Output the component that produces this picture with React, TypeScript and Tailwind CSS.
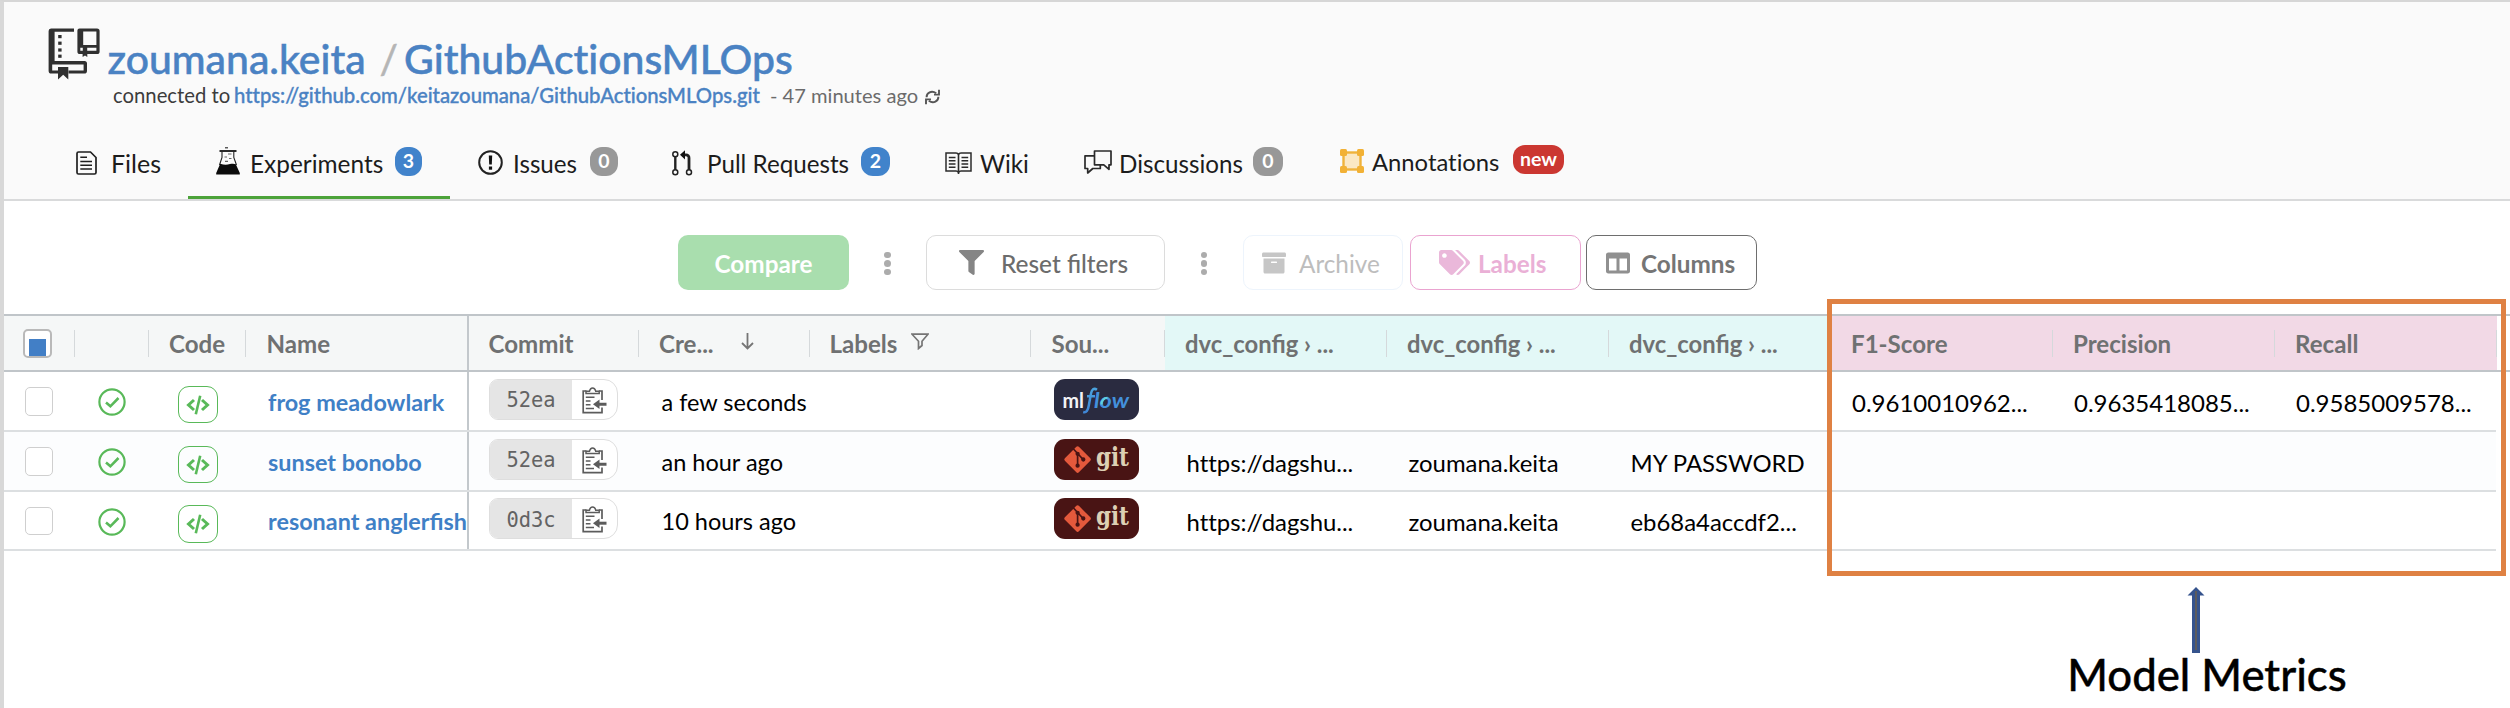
import type { ReactNode } from "react";
import { FaArchive, FaColumns, FaFilter, FaTags } from "react-icons/fa";

const NO_LIGA = "[font-variant-ligatures:none]";

function RepoIcon() {
  return (
    <svg width="52" height="52" viewBox="48 28 52 52" className="shrink-0">
      <g fill="#303030">
        <path d="M51 28.5H74V31.8H54.6V61H84.5A2.5 2.5 0 0 1 87 63.5V71A2.8 2.8 0 0 1 84.2 73.6H68.5V70.4H83.6V64.4H52.2V70.4H58V73.6H51.6A2.9 2.9 0 0 1 48.6 70.7V31A2.5 2.5 0 0 1 51 28.5Z" />
        <path d="M58 67H68.3V79.5L63.2 74.8L58 79.5Z" />
        <rect x="58.2" y="35" width="3.4" height="3.2" />
        <rect x="58.2" y="41.6" width="3.4" height="3.2" />
        <rect x="58.2" y="48.4" width="3.4" height="3.2" />
        <rect x="58.2" y="54.6" width="3.4" height="3.2" />
        <path
          fillRule="evenodd"
          d="M79.5 28.5H97A2.6 2.6 0 0 1 99.6 31.1V51.4A2.6 2.6 0 0 1 97 54H87.3V57L85 55.4L82.6 57V54H80A2.6 2.6 0 0 1 77.4 51.4V30.6A2.1 2.1 0 0 1 79.5 28.5ZM83.2 31.6V45H96.4V31.6ZM80.3 47.8V50.8H82.8V47.8ZM87.2 47.8V50.8H96.4V47.8Z"
        />
      </g>
    </svg>
  );
}

function SyncIcon() {
  return (
    <svg width="15" height="16" viewBox="0 0 15 16" fill="none" stroke="#555" strokeWidth="1.9">
      <path d="M1.6 8.2C1.500 4 6.500 .8 11.200 4.300" />
      <path d="M14 .8V5.600H9" />
      <path d="M13.400 7.800C13.500 12 8.500 15.200 3.800 11.700" />
      <path d="M1 15.200V10.400H6" />
    </svg>
  );
}

function FileIcon() {
  return (
    <svg width="21" height="24" viewBox="0 0 21 24" fill="none" stroke="#1f1f1f" strokeWidth="1.7">
      <path d="M2.500 1H14.500L20 6.500V21.500A1.500 1.500 0 0 1 18.500 23H2.500A1.500 1.500 0 0 1 1 21.500V2.500A1.500 1.500 0 0 1 2.500 1Z" />
      <path d="M4.300 6.300H11M4.300 10.500H16M4.300 14.200H16M4.300 18H16" strokeWidth="1.6" />
    </svg>
  );
}

function FlaskIcon() {
  return (
    <svg width="24" height="28" viewBox="0 0 24 28" className="-mt-[3px]">
      <path d="M9 .8H12" stroke="#333" strokeWidth="1.200" />
      <path d="M3.500 4H20.500" stroke="#111" strokeWidth="1.800" />
      <path d="M6 4.500V10.500L3.500 18M17.800 4.500V10.500L20.500 18" stroke="#222" strokeWidth="1.100" fill="none" />
      <path d="M12 7H15.500M8.500 10H11M13 11.500H15.500M9 14.300H12" stroke="#666" strokeWidth="1.200" />
      <path d="M4.200 16.800C8 18 11 18 14 17C16.500 16.400 18.500 16.600 19.800 17.200L23.800 26V27.600H.2V26Z" fill="#0b0b0b" />
    </svg>
  );
}

function IssueIcon() {
  return (
    <svg width="25" height="25" viewBox="0 0 25 25">
      <circle cx="12.500" cy="12.500" r="11.300" fill="none" stroke="#222" strokeWidth="2" />
      <path d="M10.800 5.500H14.200L13.800 14.500H11.200Z" fill="#111" />
      <rect x="10.900" y="16.500" width="3.200" height="3.200" fill="#111" />
    </svg>
  );
}

function PullIcon() {
  return (
    <svg width="22" height="26" viewBox="0 0 22 26" fill="none" stroke="#222">
      <circle cx="4.300" cy="4.300" r="2.500" strokeWidth="1.500" />
      <circle cx="4.300" cy="22.300" r="2.500" strokeWidth="1.500" />
      <circle cx="18" cy="22.300" r="2.500" strokeWidth="1.500" />
      <path d="M4.300 7V19.800" strokeWidth="2.400" />
      <path d="M12.500 4.800H15A3 3 0 0 1 18 8V19.800" strokeWidth="2.800" />
      <path d="M9 4.800L14 .2V9.400Z" fill="#111" stroke="none" />
    </svg>
  );
}

function WikiIcon() {
  return (
    <svg width="27" height="22" viewBox="0 0 27 22" fill="none" stroke="#2b2b2b">
      <path d="M13.500 2.500C13 1.400 12.500 1 11 1H1V19H11C12.500 19 13 19.400 13.500 20.500C14 19.400 14.500 19 16 19H26V1H16C14.500 1 14 1.400 13.500 2.500Z" strokeWidth="1.500" />
      <path d="M13.500 2V22" strokeWidth="1.600" />
      <path d="M3.800 5.500H10.500M3.800 8.800H10.500M3.800 12H10.500M3.800 15.200H10.500M16.500 5.500H23.200M16.500 8.800H23.200M16.500 12H23.200M16.500 15.200H23.200" strokeWidth="1.600" />
    </svg>
  );
}

function DiscussionIcon() {
  return (
    <svg width="28" height="24" viewBox="0 0 28 24" fill="none" stroke="#2b2b2b" strokeWidth="1.700" strokeLinejoin="round" className="-mt-px">
      <path d="M10.500 1H27V14.800H25V19.300L19.800 14.800H10.500Z" />
      <path d="M10.300 5.800H1V18.500H3.700V23L8.800 18.500H16.300V15" />
    </svg>
  );
}

function AnnotationIcon() {
  return (
    <svg width="24" height="24" viewBox="0 0 24 24">
      <rect x="3.500" y="3.500" width="17" height="17" fill="#fbe8c4" stroke="#efb33c" strokeWidth="2.400" />
      <g fill="#f2b135">
        <rect x="0" y="0" width="7" height="7" rx="1.500" />
        <rect x="17" y="0" width="7" height="7" rx="1.500" />
        <rect x="0" y="17" width="7" height="7" rx="1.500" />
        <rect x="17" y="17" width="7" height="7" rx="1.500" />
      </g>
    </svg>
  );
}

function Badge({ tone, children }: { tone: string; children: ReactNode }) {
  return (
    <span className={`-mt-[3px] flex h-[29px] items-center justify-center rounded-[12px] text-[19.5px] leading-none font-bold text-white ${tone}`}>
      <span className="-mt-px">{children}</span>
    </span>
  );
}

function Tab({ className, icon, label, labelClass, badge }: { className: string; icon: ReactNode; label: string; labelClass: string; badge?: ReactNode }) {
  return (
    <div className={`flex h-[70px] shrink-0 items-center border-b-[3px] pl-7 ${className}`}>
      {icon}
      <span className={`shrink-0 pt-[3px] whitespace-nowrap text-[#1c1c1c] ${NO_LIGA} ${labelClass}`}>{label}</span>
      {badge}
    </div>
  );
}

function Dots({ className }: { className: string }) {
  return (
    <div className={`flex flex-col items-center gap-[2px] ${className}`}>
      <i className="size-[6.5px] rounded-full bg-[#acacac]" />
      <i className="size-[6.5px] rounded-full bg-[#acacac]" />
      <i className="size-[6.5px] rounded-full bg-[#acacac]" />
    </div>
  );
}

function HeadCell({ className, children, last }: { className: string; children?: ReactNode; last?: boolean }) {
  return (
    <div className={`flex h-full shrink-0 items-center ${className}`}>
      <div className="flex grow items-center pt-px whitespace-nowrap">{children}</div>
      {!last && <i className="h-[27px] w-[1.5px] bg-[#d5d9db]" />}
    </div>
  );
}

function ClipboardIcon() {
  return (
    <svg width="25" height="27" viewBox="0 0 25 27" fill="none" stroke="#5c5c5c" strokeWidth="1.700">
      <path d="M4.500 4H1.200V25.600H20V20.500M20 13V4H16.800" />
      <path d="M4 6.600V4.200H7.500C8 1.800 9.200 1 10.600 1S13.200 1.800 13.700 4.200H17.200V6.600Z" strokeWidth="1.500" />
      <path d="M3.800 10.300H12.500M3.800 14H8.500M3.800 17.700H8.500M3.800 21.400H12" strokeWidth="1.500" />
      <path d="M16 17.200H24.500" strokeWidth="3" />
      <path d="M11 17.200L17.500 12.500V21.900Z" fill="#5c5c5c" stroke="none" />
    </svg>
  );
}

function MlflowLogo() {
  return (
    <svg width="85" height="41" viewBox="0 0 85 41" className="mt-[-7px] rounded-[11px] bg-[#2a2b40]">
      <defs>
        <linearGradient id="flow" x1="0" x2="0" y1="0" y2="1">
          <stop offset="0" stopColor="#4aa3df" />
          <stop offset="1" stopColor="#3f86d6" />
        </linearGradient>
      </defs>
      <text x="8.500" y="28.500" fontFamily="Lato, sans-serif" fontWeight="700" fontSize="21.500" textLength="21.500" lengthAdjust="spacingAndGlyphs" fill="#f3f3f5">ml</text>
      <path d="M43 10.800C39.800 8.600 37.800 10.500 37 14.500L34.800 26.500C34 31.500 32.300 34 29.200 33M33 17.300H41" fill="none" stroke="url(#flow)" strokeWidth="2.500" />
      <text x="40" y="28.500" fontFamily="Lato, sans-serif" fontStyle="italic" fontWeight="700" fontSize="21" textLength="35" lengthAdjust="spacingAndGlyphs" fill="#4390dc">low</text>
      <path d="M47.500 25.500C47.300 21.500 50 18.800 53.500 18.900" fill="none" stroke="#5fd0de" strokeWidth="2.200" />
    </svg>
  );
}

function GitLogo() {
  return (
    <svg width="85" height="41" viewBox="0 0 85 41" className="mt-[-7px] rounded-[11px] bg-[#491414]">
      <rect x="-9.900" y="-9.900" width="19.800" height="19.800" rx="1.800" transform="translate(23.600 20.600) rotate(45)" fill="#e4593c" />
      <g stroke="#491414" strokeWidth="1.700" fill="#491414">
        <path d="M19 9.500L23.600 14.500L29 20.300M23.600 14.500V26.500" fill="none" />
        <circle cx="23.600" cy="14.800" r="1.300" />
        <circle cx="29.300" cy="20.500" r="1.300" />
        <circle cx="23.600" cy="26.700" r="1.300" />
      </g>
      <text x="42" y="27.200" fontFamily="'DejaVu Serif', serif" fontWeight="700" fontSize="25.500" textLength="33" lengthAdjust="spacingAndGlyphs" fill="#ddd0b4">git</text>
    </svg>
  );
}

function DataCell({ className = "w-[222px] pl-[21px]", children }: { className?: string; children?: ReactNode }) {
  return <div className={`flex h-full shrink-0 items-center overflow-hidden pt-[3px] whitespace-nowrap ${className}`}>{children}</div>;
}

type Run = {
  name: string;
  commit: string;
  created: string;
  source: "mlflow" | "git";
  config: string[];
  metrics: string[];
  row: string;
};

const runs: Run[] = [
  { name: "frog meadowlark", commit: "52ea", created: "a few seconds", source: "mlflow", config: ["", "", ""], metrics: ["0.9610010962...", "0.9635418085...", "0.9585009578..."], row: "h-[60px]" },
  { name: "sunset bonobo", commit: "52ea", created: "an hour ago", source: "git", config: ["https://dagshu...", "zoumana.keita", "MY PASSWORD"], metrics: ["", "", ""], row: "h-[60px] bg-[#fcfdfe]" },
  { name: "resonant anglerfish", commit: "0d3c", created: "10 hours ago", source: "git", config: ["https://dagshu...", "zoumana.keita", "eb68a4accdf2..."], metrics: ["", "", ""], row: "h-[59px]" },
];

function RunRow({ run }: { run: Run }) {
  return (
    <div className={`flex w-[2492px] items-center border-b-2 border-[#dcdfe1] text-[23.9px] text-black ${run.row}`}>
      <DataCell className="w-[71px] pl-[20.5px]">
        <i className="-mt-[2px] size-[28.5px] rounded-[5px] border-[1.5px] border-[#cfcfcf] bg-white" />
      </DataCell>
      <DataCell className="w-[74px] pl-[22.5px]">
        <svg width="28" height="28" viewBox="0 0 28 28" className="-mt-px" fill="none" stroke="#59b959">
          <circle cx="14" cy="14" r="12.600" strokeWidth="2.200" />
          <path d="M8 14.500L12.400 18.300L20.500 10" strokeWidth="2.600" />
        </svg>
      </DataCell>
      <DataCell className="w-[97px] pl-[29px]">
        <span className="mt-1 flex h-[37.5px] w-[39.5px] items-center justify-center rounded-[11px] border-[1.5px] border-[#59b959]">
          <svg width="24" height="20" viewBox="0 0 24 20" fill="none" stroke="#59b959" strokeWidth="3">
            <path d="M8 5L2.500 10L8 15M16 5L21.500 10L16 15" />
            <path d="M14.200 .8L9.800 19.200" strokeWidth="2.600" />
          </svg>
        </span>
      </DataCell>
      <DataCell className="w-[223px] border-r-2 border-[#c3c8cc] pl-[22px] text-[23.4px] font-bold text-[#3f80c6]">{run.name}</DataCell>
      <DataCell className="w-[170px] pl-5">
        <span className="mt-[-6.5px] flex h-[41px] w-[129px] overflow-hidden rounded-l-[9px] rounded-r-[14px] border-[1.5px] border-[#dedede] bg-white">
          <span className="flex w-[82px] shrink-0 items-center justify-center bg-[#e5e5e5] pt-[3px] font-['DejaVu_Sans_Mono',monospace] text-[20.4px] text-[#636363]">{run.commit}</span>
          <span className="flex grow items-center justify-center pt-[2px]"><ClipboardIcon /></span>
        </span>
      </DataCell>
      <DataCell className="w-[171px] pl-[22.5px] text-[23.5px]">{run.created}</DataCell>
      <DataCell className="w-[221px]" />
      <DataCell className="w-[134px] pl-[23px]">{run.source === "git" ? <GitLogo /> : <MlflowLogo />}</DataCell>
      {run.config.map((value, i) => (
        <DataCell key={`c${i}`}><span className={`pl-[.5px] ${NO_LIGA}`}>{value}</span></DataCell>
      ))}
      {run.metrics.map((value, i) => (
        <DataCell key={`m${i}`}><span className="text-[24px]">{value}</span></DataCell>
      ))}
    </div>
  );
}

export default function App() {
  return (
    <div className="relative flex h-[708px] w-[2510px] flex-col overflow-hidden border-t-2 border-l-4 border-t-[#d6d6d6] border-l-[#d8d8d8] bg-white font-['Lato',sans-serif]">
      <header className="flex h-[199px] shrink-0 flex-col border-b-2 border-[#d9dadb] bg-[#fafafa]">
        <div className="flex h-[77px] shrink-0 pt-[26px] pl-11">
          <RepoIcon />
          <h1 className={`mt-[6.5px] flex pl-[7.5px] text-[40.9px] leading-[48px] font-medium text-[#4a82c3] [-webkit-text-stroke:0.5px] ${NO_LIGA}`}>
            <span className="w-[272px]">zoumana.keita</span>
            <span className="w-[24.5px] font-normal text-[#b5b5b5]">/</span>
            <span>GithubActionsMLOps</span>
          </h1>
        </div>
        <div className={`flex h-[30px] shrink-0 items-center pt-[2px] pl-[109px] text-[20.3px] text-[#3c3c3c] ${NO_LIGA}`}>
          <span className="w-[121px]">connected to</span>
          <span className="w-[536px] font-medium text-[#4a82c3] [-webkit-text-stroke:0.35px]">https://github.com/keitazoumana/GithubActionsMLOps.git</span>
          <span className="w-[155px] text-[20.1px] text-[#6b6b6b]">- 47 minutes ago</span>
          <span className="pt-1"><SyncIcon /></span>
        </div>
        <nav className="mt-5 flex h-[70px] shrink-0 pl-[44px] text-[24.2px]">
          <Tab className="w-[140px] border-transparent" icon={<FileIcon />} label="Files" labelClass="pl-[14px] text-[25px]" />
          <Tab className="w-[262px] border-[#4ca33a]" icon={<FlaskIcon />} label="Experiments" labelClass="w-[155px] pl-[10px] text-[24.4px]" badge={<Badge tone="w-[27px] bg-[#4183cb]">3</Badge>} />
          <Tab className="w-[193px] border-transparent" icon={<IssueIcon />} label="Issues" labelClass="w-[87px] pl-[10px]" badge={<Badge tone="w-[28px] bg-[#989898]">0</Badge>} />
          <Tab className="w-[274px] border-transparent" icon={<PullIcon />} label="Pull Requests" labelClass="w-[168px] pl-[14px]" badge={<Badge tone="w-[29px] bg-[#4183cb]">2</Badge>} />
          <Tab className="w-[139px] border-transparent" icon={<WikiIcon />} label="Wiki" labelClass="pl-2" />
          <Tab className="w-[256px] border-transparent" icon={<DiscussionIcon />} label="Discussions" labelClass="w-[141px] pl-[7px]" badge={<Badge tone="w-[30px] bg-[#989898]">0</Badge>} />
          <Tab className="w-[280px] border-transparent pb-[3px]" icon={<AnnotationIcon />} label="Annotations" labelClass="w-[149px] pl-2 text-[23.8px]" badge={<Badge tone="w-[51px] bg-[#cb3731] text-[18px]">new</Badge>} />
        </nav>
      </header>

      <section className="flex h-[113px] shrink-0 items-start pt-[34px] pl-[674px] text-[24.3px]">
        <button className="h-[55px] w-[171px] rounded-[10px] bg-[#a9deae] pt-[3px] font-bold text-white">Compare</button>
        <Dots className="mt-[16.5px] w-[77px]" />
        <button className="flex h-[55px] w-[239px] items-center rounded-[10px] border-[1.5px] border-[#dcdcdc] pl-8 text-[24.4px] font-medium text-[#6c6c6c]">
          <FaFilter className="size-[25px] text-[#858585]" />
          <span className="pt-[3px] pl-[17px]">Reset filters</span>
        </button>
        <Dots className="mt-[16.5px] w-[78px]" />
        <button className="flex h-[55px] w-[160px] items-center rounded-[10px] border-[1.5px] border-[#edf4fc] pl-[18px] text-[#bdbdbd]">
          <FaArchive className="size-[24px] text-[#c6c6c6]" />
          <span className="pt-[3px] pl-[13px]">Archive</span>
        </button>
        <button className="ml-[7px] flex h-[55px] w-[171px] items-center rounded-[10px] border-[1.5px] border-[#eaa3d0] pl-[28px] font-bold text-[#eab0d6]">
          <FaTags className="h-[25px] w-[31px] text-[#eab8da]" />
          <span className="pt-[3px] pl-[8px]">Labels</span>
        </button>
        <button className="ml-[5px] flex h-[55px] w-[171px] items-center rounded-[10px] border-[1.5px] border-[#6e6e6e] pl-[19px] font-bold text-[#757575]">
          <FaColumns className="size-[24px] text-[#909090]" />
          <span className="pt-[3px] pl-[11px]">Columns</span>
        </button>
      </section>

      <section className="shrink-0">
        <div className="flex h-[58px] border-y-2 border-[#c0c5c9] text-[24.1px] font-bold text-[#6f7172]">
          <HeadCell className="w-[71px] bg-[#f5f7f7] pl-[19px]">
            <span className="flex size-[29px] items-end justify-center rounded-[5px] border-2 border-[#b9b9b9] bg-white">
              <i className="size-[17px] bg-[#427fc6]" />
            </span>
          </HeadCell>
          <HeadCell className="w-[74px] bg-[#f5f7f7]" />
          <HeadCell className="w-[97px] bg-[#f5f7f7] pl-5"><span className="pt-[2px]">Code</span></HeadCell>
          <HeadCell className="w-[223px] border-r-2 border-[#c3c8cc] bg-[#f5f7f7] pl-[20.5px]" last><span className="pt-[2px]">Name</span></HeadCell>
          <HeadCell className="w-[170px] bg-[#f5f7f7] pl-[19.5px]"><span className="pt-[2px]">Commit</span></HeadCell>
          <HeadCell className="w-[171px] bg-[#f5f7f7] pl-5">
            <span className="w-[82px] pt-[2px]">Cre...</span>
            <svg width="13" height="17" viewBox="0 0 13 17" fill="none" stroke="#757575" strokeWidth="1.800" className="-mt-[3px]">
              <path d="M6.500 0V15M1 10L6.500 15.500L12 10" />
            </svg>
          </HeadCell>
          <HeadCell className="w-[221px] bg-[#f5f7f7] pl-[19.5px]">
            <span className="w-[81px] pt-[2px]">Labels</span>
            <svg width="18" height="17" viewBox="0 0 18 17" fill="none" stroke="#757575" strokeWidth="1.700" className="-mt-[3px]">
              <path d="M1 1.200H17L11 8.300V12.500L7.500 15.500V8.300Z" />
            </svg>
          </HeadCell>
          <HeadCell className="w-[134px] bg-[#f5f7f7] pl-[20.5px]"><span className="pt-[2px]">Sou...</span></HeadCell>
          <HeadCell className="w-[222px] bg-[#e3f8f7] pl-5"><span className="pt-[2px] text-[23.8px]">dvc_config › ...</span></HeadCell>
          <HeadCell className="w-[222px] bg-[#e3f8f7] pl-5"><span className="pt-[2px] text-[23.8px]">dvc_config › ...</span></HeadCell>
          <HeadCell className="w-[222px] bg-[#e3f8f7] pl-5"><span className="pt-[2px] text-[23.8px]">dvc_config › ...</span></HeadCell>
          <HeadCell className="w-[222px] bg-[#f2d9e6] pl-5"><span className="pt-[2px]">F1-Score</span></HeadCell>
          <HeadCell className="w-[222px] bg-[#f2d9e6] pl-5"><span className="pt-[2px]">Precision</span></HeadCell>
          <HeadCell className="w-[222px] bg-[#f2d9e6] pl-5"><span className="pt-[2px]">Recall</span></HeadCell>
        </div>
        {runs.map((run) => (
          <RunRow key={run.name} run={run} />
        ))}
      </section>

      <div className="absolute top-[297px] left-[1823px] h-[277px] w-[679px] border-[5px] border-[#df8143]" />
      <div className="absolute top-[585px] left-[2063px] flex w-[280px] flex-col items-center">
        <svg width="18" height="66" viewBox="0 0 18 66" className="-ml-[23px]">
          <path d="M9 0L17.500 8.500H13V66H5V8.500H.5Z" fill="#35538d" />
          <path d="M9 4V63" stroke="#5c5b5c" strokeWidth="2" />
        </svg>
        <span className={`-mt-[5px] text-[43.700px] leading-[52px] font-medium whitespace-nowrap text-black [-webkit-text-stroke:0.4px] ${NO_LIGA}`}>Model Metrics</span>
      </div>
    </div>
  );
}
